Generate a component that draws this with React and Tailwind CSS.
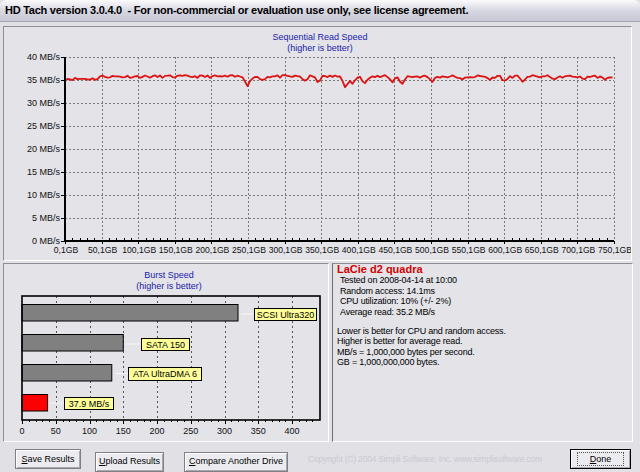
let seed = 11
const rand = () => {
  seed = (seed * 16807) % 2147483647
  return seed / 2147483647
}

// dips along the read curve: [x, depth in MB/s]
const dips = [
  [248, 2.0], [262, 0.8], [305, 0.9], [318, 1.1], [346, 2.6], [353, 1.6], [364, 1.4],
  [392, 1.2], [402, 1.6], [432, 1.1], [462, 0.9], [490, 0.7], [505, 1.0], [522, 1.1],
  [556, 0.7], [583, 0.6], [605, 0.9],
]

const readPoints = []
for (let x = 65; x <= 614; x += 2.5) {
  let v = 35.75 + (rand() - 0.5) * 0.6
  if (x < 100) v -= 0.5
  dips.forEach(([dx, d]) => {
    const dist = Math.abs(x - dx)
    if (dist < 5) v -= d * (1 - dist / 5)
  })
  readPoints.push(`${x},${(242 - v * 4.6).toFixed(1)}`)
}

const gridX = Array.from({ length: 16 }, (_, i) => 65 + i * 36.6)
const gridY = Array.from({ length: 9 }, (_, i) => 58 + i * 23)

function ReadChart() {
  return (
    <svg width="627" height="233" viewBox="4 28 627 233" className="block">
      <g fontSize="9" fill="#1c1ca8" textAnchor="middle">
        <text x="320" y="41">Sequential Read Speed</text>
        <text x="320" y="52">(higher is better)</text>
      </g>
      <g stroke="#7a7a7a" strokeWidth="1" strokeDasharray="2 2">
        {gridY.slice(0, 8).map((y) => (
          <line key={y} x1="65" y1={y + 0.5} x2="614" y2={y + 0.5} />
        ))}
        {gridX.slice(1).map((x) => (
          <line key={x} x1={Math.round(x) + 0.5} y1="58" x2={Math.round(x) + 0.5} y2="242" />
        ))}
      </g>
      <g fontSize="9" fill="#111" textAnchor="end">
        {gridY.map((y, i) => (
          <text key={y} x="60" y={y + 3}>{40 - i * 5} MB/s</text>
        ))}
      </g>
      <g stroke="#000" strokeWidth="1">
        {gridY.map((y) => (
          <line key={y} x1="61" y1={y + 0.5} x2="65" y2={y + 0.5} />
        ))}
        {Array.from({ length: 76 }, (_, i) => 65 + i * 7.32).map((x, i) => (
          <line key={i} x1={Math.round(x) + 0.5} y1={i % 5 === 0 ? 245 : 239} x2={Math.round(x) + 0.5} y2="242" />
        ))}
      </g>
      <polyline points={readPoints.join(' ')} fill="none" stroke="#dc1414" strokeWidth="1.8" strokeLinejoin="round" />
      <path d="M65 58 V242 H614" fill="none" stroke="#000" strokeWidth="2" />
      <g fontSize="8.6" fill="#111" textAnchor="middle">
        {gridX.map((x, i) => (
          <text key={x} x={x + 1} y="254">{i * 50},1GB</text>
        ))}
      </g>
    </svg>
  )
}

const burstX = (v) => 22 + v * 0.675

const bars = [
  { y: 305, v: 320, label: 'SCSI Ultra320', box: [254, 309, 62, 12], fill: '#808080' },
  { y: 335, v: 150, label: 'SATA 150', box: [141, 339, 48, 12], fill: '#808080' },
  { y: 365, v: 133, label: 'ATA UltraDMA 6', box: [128, 368, 73, 13], fill: '#808080' },
  { y: 395, v: 37.9, label: '37.9 MB/s', box: [64, 398, 49, 12], fill: '#ff0000' },
]

function BurstChart() {
  return (
    <svg width="324" height="177" viewBox="4 265 324 177" className="block">
      <g fontSize="9" fill="#1c1ca8" textAnchor="middle">
        <text x="169" y="279">Burst Speed</text>
        <text x="169" y="290">(higher is better)</text>
      </g>
      <g stroke="#555" strokeWidth="1" strokeDasharray="2 3">
        {[50, 100, 150, 200, 250, 300, 350, 400].map((v) => (
          <line key={v} x1={Math.round(burstX(v)) + 0.5} y1="297" x2={Math.round(burstX(v)) + 0.5} y2="421" />
        ))}
      </g>
      {bars.map((b) => {
        const end = burstX(b.v)
        const [bx, by, bw, bh] = b.box
        return (
          <g key={b.label}>
            <rect x="22" y={b.y + 0.5} width={end - 22} height="16.5" fill={b.fill} stroke="#000" strokeWidth="1" />
            <line x1={end + 3} y1={by + bh / 2} x2={bx} y2={by + bh / 2} stroke="#f4f4f4" strokeWidth="1.2" />
            <rect x={bx + 0.5} y={by + 0.5} width={bw} height={bh} fill="#ffff99" stroke="#000" strokeWidth="1" />
            <text x={bx + bw / 2 + 0.5} y={by + bh / 2 + 3.5} fontSize="9" fill="#000" textAnchor="middle">{b.label}</text>
          </g>
        )
      })}
      <g stroke="#000" strokeWidth="1">
        {Array.from({ length: 44 }, (_, i) => burstX(i * 10)).map((x, i) => (
          <line key={i} x1={Math.round(x) + 0.5} y1="421" x2={Math.round(x) + 0.5} y2={i % 5 === 0 ? 425 : 423} />
        ))}
      </g>
      <rect x="22" y="297" width="298" height="124" fill="none" stroke="#000" strokeWidth="1.6" />
      <g fontSize="9" fill="#111" textAnchor="middle">
        {[0, 50, 100, 150, 200, 250, 300, 350, 400].map((v) => (
          <text key={v} x={burstX(v)} y="435">{v}</text>
        ))}
      </g>
    </svg>
  )
}

function WinButton({ label, rest, width, isDefault }) {
  return (
    <button
      type="button"
      className={`h-[20px] ${width} flex-none ${isDefault ? 'border border-black' : 'border border-[#7f7f86]'} bg-[#ececf0] text-[9px] text-black shadow-[inset_1px_1px_0_#ffffff,inset_-1px_-1px_0_#a8a8b0]`}
    >
      <span className={isDefault ? 'border border-dotted border-[#555] px-[12px] py-[1px]' : ''}>
        <span className="underline">{label}</span>
        {rest}
      </span>
    </button>
  )
}

export default function App() {
  return (
    <div className="flex h-[472px] w-[640px] flex-col overflow-hidden bg-[#e0e0e5] font-['Liberation_Sans',Arial,sans-serif] text-black">
      <div className="h-[22px] flex-none rounded-t-[6px] border-b border-[#a6a6b4] bg-linear-to-b from-[#fbfbfd] via-[#d8d8e3] to-[#c8c8d6] pl-[5px] text-[11px] leading-[21px] font-bold tracking-[-0.25px]">
        HD Tach version 3.0.4.0&nbsp; - For non-commercial or evaluation use only, see license agreement.
      </div>

      <div className="flex flex-1 flex-col px-[3px] pt-[4px]">
        <div className="h-[235px] w-[629px] border border-t-[#8e8e98] border-l-[#8e8e98] border-r-white border-b-white bg-[#e3e3e8]">
          <ReadChart />
        </div>

        <div className="mt-[2px] flex h-[179px] gap-[3px]">
          <div className="w-[326px] border border-t-[#8e8e98] border-l-[#8e8e98] border-r-white border-b-white bg-[#e3e3e8]">
            <BurstChart />
          </div>
          <div className="w-[301px] border border-t-[#8e8e98] border-l-[#6e6e78] border-r-white border-b-white bg-[#e3e3e8] pl-[4px] text-[9px] leading-[10.5px] tracking-[-0.2px]">
            <div className="text-[11px] leading-[11px] font-bold tracking-normal text-[#d40000]">LaCie d2 quadra</div>
            <div className="pl-[3px]">
              <div>Tested on 2008-04-14 at 10:00</div>
              <div>Random access: 14.1ms</div>
              <div>CPU utilization: 10% (+/- 2%)</div>
              <div>Average read: 35.2 MB/s</div>
            </div>
            <div className="h-[8.5px]" />
            <div>Lower is better for CPU and random access.</div>
            <div>Higher is better for average read.</div>
            <div>MB/s = 1,000,000 bytes per second.</div>
            <div>GB = 1,000,000,000 bytes.</div>
          </div>
        </div>

        <div className="mt-[5px] flex items-center pl-[12px]">
          <WinButton label="S" rest="ave Results" width="w-[66px]" />
          <div className="ml-[14px]">
            <WinButton label="U" rest="pload Results" width="w-[69px]" />
          </div>
          <div className="ml-[20px]">
            <WinButton label="C" rest="ompare Another Drive" width="w-[104px]" />
          </div>
          <div className="ml-[20px] w-[262px] text-[8.5px] tracking-[-0.2px] text-[#cacad2]">
            Copyright (C) 2004 Simpli Software, Inc. www.simplisoftware.com
          </div>
          <WinButton label="D" rest="one" width="w-[61px]" isDefault />
        </div>
      </div>
    </div>
  )
}
